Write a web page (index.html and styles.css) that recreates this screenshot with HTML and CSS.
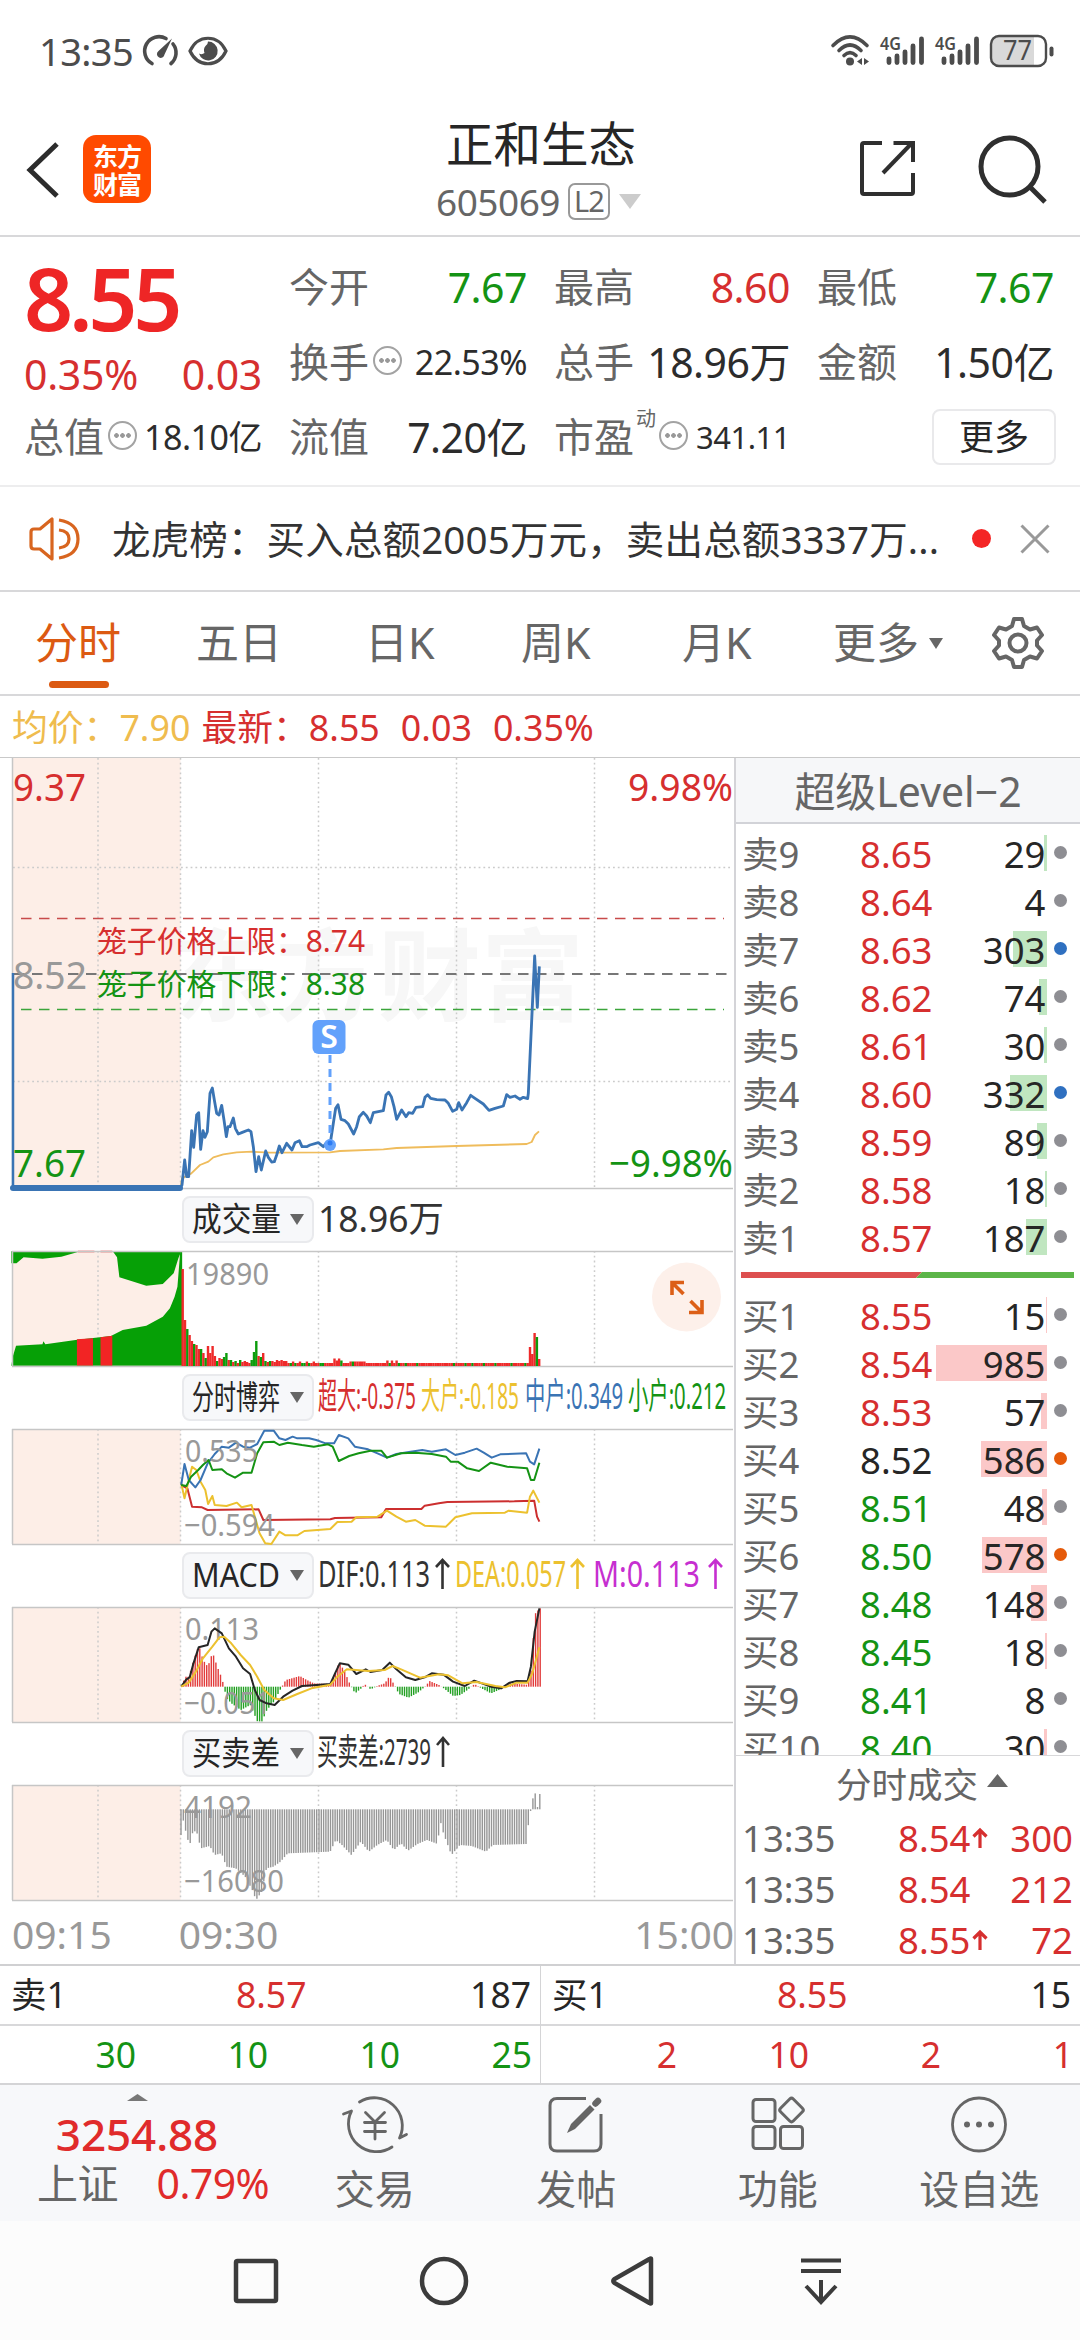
FILE: index.html
```html
<!DOCTYPE html>
<html lang="zh-CN">
<head>
<meta charset="utf-8">
<title>正和生态 605069</title>
<link rel="stylesheet" href="styles.css">
</head>
<body>
<div class="screen">

<div class="statusbar">
  <span class="clock">13:35</span>
  <svg class="st-gauge" width="36" height="32" viewBox="0 0 36 32"><g fill="none" stroke="#4c4c4c" stroke-width="3.6" stroke-linecap="round"><path d="M8 28.5A14 14 0 0 1 22 3.5"/><path d="M29 9A14 14 0 0 1 27 28.5"/></g><path d="M28 3.5L20.5 19.5A3.8 3.8 0 1 1 14.5 16Z" fill="#4c4c4c"/></svg>
  <svg class="st-eye" width="40" height="32" viewBox="0 0 40 32"><path d="M2 16C10 -1 30 -1 38 16C30 33 10 33 2 16Z" fill="none" stroke="#4c4c4c" stroke-width="3.2"/><path d="M20 6.500A9.500 9.500 0 1 1 11 18.500Q14 20 16.500 18Q15 14 17.500 11Q20 9.500 20 6.500Z" fill="#4c4c4c"/></svg>
  <span class="grow"></span>
  <svg width="38" height="32" viewBox="0 0 38 32"><g fill="none" stroke="#4c4c4c" stroke-width="3.6" stroke-linecap="round"><path d="M2 10.500Q19 -6.500 36 10.500"/><path d="M8 15.500Q19 4.500 30 15.500"/><path d="M13 20.500Q19 14.500 25 20.500"/></g><circle cx="19" cy="26.500" r="4" fill="#4c4c4c"/><path d="M31 23V30L26 26.500ZM33 23V30L38 26.500Z" fill="#4c4c4c"/></svg>
  <svg class="st-sig" width="46" height="32" viewBox="0 0 46 32"><text x="0" y="15" class="net" textLength="21" lengthAdjust="spacingAndGlyphs">4G</text><g stroke="#4c4c4c" stroke-width="4.800" stroke-linecap="round"><path d="M9 24V27.500M17 21V27.500M25 17V27.500M33 11V27.500M41.500 4V27.500"/></g></svg>
  <svg class="st-sig2" width="46" height="32" viewBox="0 0 46 32"><text x="0" y="15" class="net" textLength="21" lengthAdjust="spacingAndGlyphs">4G</text><g stroke="#4c4c4c" stroke-width="4.800" stroke-linecap="round"><path d="M9 24V27.500M17 21V27.500M25 17V27.500M33 11V27.500M41.500 4V27.500"/></g></svg>
  <svg class="st-bat" width="66" height="34" viewBox="0 0 66 34"><path d="M3 9Q3 3 9 3H45V31H9Q3 31 3 25Z" fill="#d9d9d9"/><rect x="2" y="2" width="55" height="30" rx="8" fill="none" stroke="#4c4c4c" stroke-width="2.400"/><rect x="60.500" y="12.500" width="4" height="10" rx="2" fill="#4c4c4c"/><text x="14" y="26" class="bat" textLength="29" lengthAdjust="spacingAndGlyphs">77</text></svg>
</div>

<header class="titlebar">
  <svg class="back" width="34" height="56" viewBox="0 0 34 56"><path d="M31 2L4 28L31 54" fill="none" stroke="#2c2c2c" stroke-width="5"/></svg>
  <div class="logo"><span>东方</span><span>财富</span></div>
  <div class="title">
    <div class="name">正和生态</div>
    <div class="code"><span>605069</span><span class="l2">L2</span><i class="tri-down grey"></i></div>
  </div>
  <svg class="share" width="60" height="60" viewBox="0 0 60 60"><g fill="none" stroke="#2f2f2f" stroke-width="4"><path d="M24 4H6Q4 4 4 6V53Q4 55 6 55H53Q55 55 55 53V34"/><path d="M35.500 4H55V23"/><path d="M54 4L25 34"/></g></svg>
  <svg class="search" width="70" height="72" viewBox="0 0 70 72"><g fill="none" stroke="#2f2f2f" stroke-width="5"><circle cx="31.500" cy="32.500" r="28.500"/><path d="M52 53L67 68"/></g></svg>
</header>

<section class="summary">
  <div class="col-a">
    <div class="price">8.55</div>
    <div class="chg red"><span>0.35%</span><span>0.03</span></div>
    <div class="cell"><b>总值</b><i class="dots"></i><span class="sm">18.10亿</span></div>
  </div>
  <div class="col-b">
    <div class="cell"><b>今开</b><span class="green">7.67</span></div>
    <div class="cell"><b>换手</b><i class="dots"></i><span class="sm">22.53%</span></div>
    <div class="cell"><b>流值</b><span>7.20亿</span></div>
  </div>
  <div class="col-c">
    <div class="cell"><b>最高</b><span class="red">8.60</span></div>
    <div class="cell"><b>总手</b><span>18.96万</span></div>
    <div class="cell"><b>市盈</b><sup>动</sup><i class="dots"></i><span class="xs">341.11</span></div>
  </div>
  <div class="col-d">
    <div class="cell"><b>最低</b><span class="green">7.67</span></div>
    <div class="cell"><b>金额</b><span>1.50亿</span></div>
    <div class="cell end"><button class="more">更多</button></div>
  </div>
</section>

<section class="notice">
  <svg width="52" height="46" viewBox="0 0 52 46"><g fill="none" stroke="#d8651f" stroke-width="3.200" stroke-linejoin="round"><path d="M23 3V43L11 33H5Q2 33 2 30V16Q2 13 5 13H11Z"/><path d="M30 14Q40 15 40 23Q40 31 30 32"/><path d="M30 4Q49 7 49 23Q49 39 30 42"/></g></svg>
  <p>龙虎榜：买入总额2005万元，卖出总额3337万...</p>
  <i class="reddot"></i>
  <svg width="30" height="30" viewBox="0 0 30 30"><path d="M1.500 1.500L28.500 28.500M28.500 1.500L1.500 28.500" stroke="#999" stroke-width="3"/></svg>
</section>

<nav class="tabs">
  <span class="on">分时</span><span>五日</span><span>日K</span><span>周K</span><span>月K</span><span class="m">更多</span><i class="tri-down"></i>
  <svg width="52" height="54" viewBox="0 0 52 54"><g fill="none" stroke="#666" stroke-width="4" stroke-linejoin="round"><path d="M22 3H30L32 10L38 13.500L45 11.500L50 19L45 24.500V29.500L50 35L45 42.500L38 40.500L32 44L30 51H22L20 44L14 40.500L7 42.500L2 35L7 29.500V24.500L2 19L7 11.500L14 13.500L20 10Z"/><circle cx="26" cy="27" r="8.500"/></g></svg>
</nav>

<div class="avg"><span class="gold">均价：7.90</span><span class="red">最新：8.55</span><span class="red">0.03</span><span class="red">0.35%</span></div>

<main class="body">
<div class="charts">
  <svg class="panel" width="734" height="430" viewBox="0 758 734 430">
    <text class="wm" x="172" y="1013" textLength="412" lengthAdjust="spacingAndGlyphs">东方财富</text>
    <rect x="13" y="758" width="167.500" height="430" fill="#fdeee7"/>
    <path class="grid" d="M98 758V1188M180.500 758V1188M318.500 758V1188M456.500 758V1188M594.500 758V1188M13 867.500H733M13 1081.500H733"/>
    <path class="axis" d="M12.500 758V1188M12 1188.500H733"/>
    <path d="M21 918.500H724" stroke="#c84a4a" stroke-width="1.500" stroke-dasharray="10.500 7.500"/>
    <path d="M21 1009.500H724" stroke="#3ba53b" stroke-width="1.500" stroke-dasharray="10.500 7.500"/>
    <path d="M14 974H733" stroke="#777" stroke-width="2" stroke-dasharray="10.500 7.500"/>
    <g transform="translate(170 1060) scale(.33333)" fill="none" stroke-linejoin="round">
      <polyline stroke="#efbc5c" stroke-width="5.500" points="32,383 36,355 64,340 90,315 115,305 130,292 160,283 200,277 245,275 300,278 480,277 510,273 640,268 680,264 860,258 1070,252 1085,246 1095,225 1107,214"/>
      <polyline stroke="#3a74b4" stroke-width="8.500" points="30,384 36,375 44,300 50,350 56,350 65,212 71,262 80,165 86,158 92,268 99,212 105,232 112,215 120,100 127,84 133,120 140,160 147,165 155,136 162,180 169,230 174,200 180,200 190,174 196,205 205,222 215,218 235,210 243,215 250,260 258,335 266,290 274,330 287,273 295,292 305,306 313,305 320,285 328,258 336,278 350,250 366,270 375,248 388,242 396,260 410,260 420,255 445,248 460,260 468,250 476,262 480,255 490,190 497,145 504,134 513,178 525,182 535,192 551,222 560,200 568,170 580,157 590,168 601,188 610,158 640,152 648,105 656,97 664,110 672,140 680,178 695,150 708,170 716,158 728,160 738,142 758,140 765,112 773,104 782,115 800,119 825,120 835,130 848,154 860,148 866,128 876,150 890,128 902,106 915,115 940,132 957,151 975,145 1000,138 1010,104 1020,112 1035,108 1050,118 1060,112 1073,116 1075,100 1094,-312 1102,-158 1108,-281"/>
    </g>
    <path d="M13 973V1188" stroke="#3a74b4" stroke-width="2.500"/>
    <path d="M13 1188H180" stroke="#3a74b4" stroke-width="6" stroke-linecap="round"/>
    <path d="M330 1055V1145" stroke="#62a1fb" stroke-width="3" stroke-dasharray="8 6"/>
    <circle cx="330" cy="1145" r="6" fill="#62a1fb"/><circle cx="330" cy="1143" r="2.500" fill="#2c7cf5"/>
    <rect x="312.500" y="1020" width="33" height="34" rx="6" fill="#62a1fb"/>
    <text class="badge" x="329" y="1048">S</text>
    <g class="lab">
      <text class="r" x="13" y="801" textLength="73" lengthAdjust="spacingAndGlyphs">9.37</text>
      <text class="r" x="628" y="801" textLength="105" lengthAdjust="spacingAndGlyphs">9.98%</text>
      <text class="a" x="13" y="989" textLength="74" lengthAdjust="spacingAndGlyphs">8.52</text>
      <text class="g" x="13" y="1177" textLength="73" lengthAdjust="spacingAndGlyphs">7.67</text>
      <text class="g" x="609" y="1177" textLength="124" lengthAdjust="spacingAndGlyphs">−9.98%</text>
    </g>
    <g class="cage">
      <text class="r" x="97" y="952" textLength="268" lengthAdjust="spacingAndGlyphs">笼子价格上限：8.74</text>
      <text class="g" x="97" y="995" textLength="268" lengthAdjust="spacingAndGlyphs">笼子价格下限：8.38</text>
    </g>
  </svg>

  <div class="legend"><span class="pick"><svg width="88" height="40"><text class="k" x="0" y="32" textLength="89" lengthAdjust="spacingAndGlyphs">成交量</text></svg><i class="tri-down"></i></span><svg width="420" height="46"><text class="v" x="4" y="36" textLength="126" lengthAdjust="spacingAndGlyphs">18.96万</text></svg></div>

  <svg class="panel" id="volume" width="734" height="115" viewBox="0 1251 734 115">
    <rect x="13" y="1251" width="167.500" height="115" fill="#fdeee7"/>
    <path class="grid" d="M98 1251V1366M180.500 1251V1366M318.500 1251V1366M456.500 1251V1366M594.500 1251V1366"/>
    <g transform="translate(0 1180) scale(.4719 .33333)">
      <path fill="#06a006" d="M24 557L27 530L34 497L90 493L92 484L96 493L160 480L235 468L260 450L310 437L345 410L360 385L370 350L376 320L382 214H386V557Z"/>
      <path fill="#06a006" d="M24 214V250L35 250L50 232L90 236L130 230L165 216H240L248 232L253 292L310 317L345 312L368 280L378 235L384 214Z"/>
      <path fill="#f22424" d="M163 478L197 475V557H163ZM213 472L238 467V557H213ZM165 212H200V217H165ZM213 212H238V217H213Z"/>
    </g>
    <path class="axis" d="M12.500 1251V1366M12 1251.500H733M12 1366.500H733"/>
    <g class="bars"></g>
    <text class="s" x="186" y="1285" textLength="83" lengthAdjust="spacingAndGlyphs">19890</text>
    <circle cx="686.500" cy="1297" r="34.500" fill="#fdf0ea"/>
    <g fill="none" stroke="#dc5f17" stroke-width="3.600"><path d="M684 1282.500H672V1295M672.500 1283L683.500 1294"/><path d="M689 1312.500H702V1300M701.500 1312L690.500 1301"/></g>
  </svg>

  <div class="legend"><span class="pick"><svg width="88" height="40"><text class="k" x="0" y="32" textLength="88" lengthAdjust="spacingAndGlyphs">分时博弈</text></svg><i class="tri-down"></i></span><svg width="420" height="46">
    <text class="v r" x="4" y="35" textLength="98" lengthAdjust="spacingAndGlyphs">超大:-0.375</text>
    <text class="v y" x="107" y="35" textLength="98" lengthAdjust="spacingAndGlyphs">大户:-0.185</text>
    <text class="v b" x="211" y="35" textLength="98" lengthAdjust="spacingAndGlyphs">中户:0.349</text>
    <text class="v g" x="314" y="35" textLength="98" lengthAdjust="spacingAndGlyphs">小户:0.212</text></svg></div>

  <svg class="panel" width="734" height="115" viewBox="0 1429 734 115">
    <rect x="13" y="1429" width="167.500" height="115" fill="#fdeee7"/>
    <path class="grid" d="M98 1429V1544M180.500 1429V1544M318.500 1429V1544M456.500 1429V1544M594.500 1429V1544"/>
    <path class="axis" d="M12.500 1429V1544M12 1429.500H733M12 1544.500H733"/>
    <g class="lines" transform="translate(0 1180) scale(.4719 .33333)">
      <polyline stroke="#cc2f2f" points="384,915 397,925 407,980 428,982 440,990 548,988 558,1020 700,1018 710,1014 808,1012 818,987 893,987 900,977 930,970 948,966 1090,964 1132,962 1138,1010 1143,1025"/>
      <polyline stroke="#ecc12f" points="384,910 391,955 400,900 407,860 416,870 425,905 435,930 441,972 450,948 455,975 480,978 502,968 512,982 533,975 540,1010 550,1060 562,1090 575,1092 592,1055 605,1066 630,1066 645,1053 700,1047 715,1026 745,1025 755,1012 800,1010 820,992 840,1010 860,1025 880,1020 900,1037 945,1040 965,1012 1000,1000 1070,998 1078,992 1117,998 1123,950 1130,932 1143,968"/>
      <polyline stroke="#3a74b4" points="384,915 391,852 400,900 414,922 425,900 440,850 455,822 470,800 485,803 500,788 515,800 530,803 545,792 560,752 580,752 592,775 605,780 620,770 630,775 655,775 670,780 690,790 708,790 718,765 738,775 752,800 780,808 800,820 820,833 840,822 870,815 895,810 915,815 945,808 965,825 985,818 1010,806 1025,818 1042,833 1060,823 1115,820 1123,845 1132,853 1143,806"/>
      <polyline stroke="#149314" points="384,915 395,918 405,890 420,870 430,855 442,840 450,870 470,868 480,880 498,893 515,878 533,878 545,820 558,787 580,785 592,795 610,788 640,795 665,800 695,793 705,800 718,843 740,828 760,820 785,812 808,812 820,833 850,820 880,818 915,822 945,830 955,845 970,845 990,865 1015,873 1040,848 1075,860 1117,865 1125,900 1132,900 1143,848"/>
    </g>
    <text class="s" x="185" y="1462" textLength="73" lengthAdjust="spacingAndGlyphs">0.535</text>
    <text class="s" x="184" y="1536" textLength="91" lengthAdjust="spacingAndGlyphs">−0.594</text>
  </svg>

  <div class="legend"><span class="pick"><svg width="88" height="40"><text class="k" x="0" y="32" textLength="88" lengthAdjust="spacingAndGlyphs">MACD</text></svg><i class="tri-down"></i></span><svg width="420" height="46">
    <text class="v" x="4" y="35" textLength="112" lengthAdjust="spacingAndGlyphs">DIF:0.113</text><path class="up" stroke="#333" d="M128.500 37V8M122 15L128.500 8L135 15"/>
    <text class="v y" x="141" y="35" textLength="111" lengthAdjust="spacingAndGlyphs">DEA:0.057</text><path class="up" stroke="#ecc12f" d="M263.500 37V8M257 15L263.500 8L270 15"/>
    <text class="v p" x="279" y="35" textLength="107" lengthAdjust="spacingAndGlyphs">M:0.113</text><path class="up" stroke="#c62fd0" d="M401.500 37V8M395 15L401.500 8L408 15"/></svg></div>

  <svg class="panel" id="macd" width="734" height="115" viewBox="0 1607 734 115">
    <rect x="13" y="1607" width="167.500" height="115" fill="#fdeee7"/>
    <path class="grid" d="M98 1607V1722M180.500 1607V1722M318.500 1607V1722M456.500 1607V1722M594.500 1607V1722"/>
    <path class="axis" d="M12.500 1607V1722M12 1607.500H733M12 1722.500H733"/>
    <g class="bars"></g>
    <text class="s" x="185" y="1640" textLength="74" lengthAdjust="spacingAndGlyphs">0.113</text>
    <text class="s" x="184" y="1714" textLength="87" lengthAdjust="spacingAndGlyphs">−0.051</text>
    <g class="lines" transform="translate(0 1540) scale(.4719 .33333)">
      <polyline stroke="#262626" points="384,440 395,418 402,412 410,370 421,322 440,315 448,275 455,265 470,280 485,325 500,350 515,385 530,402 540,450 550,480 565,490 582,495 600,470 620,452 640,438 700,432 710,400 720,370 738,374 755,402 775,388 785,396 810,390 826,368 840,388 860,412 880,420 900,412 915,400 940,404 960,425 985,438 1005,422 1040,440 1062,445 1080,428 1095,423 1118,424 1125,380 1133,275 1143,205"/>
      <polyline stroke="#ecc12f" points="384,440 400,428 415,395 430,355 450,320 465,292 475,290 490,310 510,345 530,375 545,410 560,450 580,475 600,480 630,462 660,445 700,434 715,410 735,388 780,393 815,390 832,378 850,388 890,413 930,403 950,406 980,430 1010,426 1050,438 1070,442 1095,428 1118,428 1128,400 1143,322"/>
    </g>
  </svg>

  <div class="legend"><span class="pick"><svg width="88" height="40"><text class="k" x="0" y="32" textLength="88" lengthAdjust="spacingAndGlyphs">买卖差</text></svg><i class="tri-down"></i></span><svg width="420" height="46"><text class="v" x="3" y="35" textLength="114" lengthAdjust="spacingAndGlyphs">买卖差:2739</text><path class="up" stroke="#333" d="M129 37V8M123 15L129 8L135 15"/></svg></div>

  <svg class="panel" id="diff" width="734" height="115" viewBox="0 1785 734 115">
    <rect x="13" y="1785" width="167.500" height="115" fill="#fdeee7"/>
    <path class="grid" d="M98 1785V1900M180.500 1785V1900M318.500 1785V1900M456.500 1785V1900M594.500 1785V1900"/>
    <path class="axis" d="M12.500 1785V1900M12 1785.500H733M12 1900.500H733"/>
    <g class="bars"></g>
    <text class="s" x="184" y="1818" textLength="68" lengthAdjust="spacingAndGlyphs">4192</text>
    <text class="s" x="184" y="1892" textLength="100" lengthAdjust="spacingAndGlyphs">−16080</text>
  </svg>

  <div class="times"><span>09:15</span><span class="t2">09:30</span><span class="t3">15:00</span></div>
</div>

<aside class="book">
  <h2>超级Level−2</h2>
  <div class="orders">
    <div class="o"><b>卖9</b><span class="red">8.65</span><em>29<i class="s" style="width:3px"></i></em><u></u></div>
    <div class="o"><b>卖8</b><span class="red">8.64</span><em>4</em><u></u></div>
    <div class="o"><b>卖7</b><span class="red">8.63</span><em>303<i class="s" style="width:34px"></i></em><u class="blue"></u></div>
    <div class="o"><b>卖6</b><span class="red">8.62</span><em>74<i class="s" style="width:8px"></i></em><u></u></div>
    <div class="o"><b>卖5</b><span class="red">8.61</span><em>30<i class="s" style="width:3px"></i></em><u></u></div>
    <div class="o"><b>卖4</b><span class="red">8.60</span><em>332<i class="s" style="width:37px"></i></em><u class="blue"></u></div>
    <div class="o"><b>卖3</b><span class="red">8.59</span><em>89<i class="s" style="width:10px"></i></em><u></u></div>
    <div class="o"><b>卖2</b><span class="red">8.58</span><em>18<i class="s" style="width:2px"></i></em><u></u></div>
    <div class="o"><b>卖1</b><span class="red">8.57</span><em>187<i class="s" style="width:21px"></i></em><u></u></div>
    <svg class="ratio" width="333" height="6" viewBox="0 0 333 6"><path d="M0 0H181L175 6H0Z" fill="#dd4f4f"/><path d="M181 0H333V6H175Z" fill="#5cb548"/></svg>
    <div class="o"><b>买1</b><span class="red">8.55</span><em>15<i class="b" style="width:1px"></i></em><u></u></div>
    <div class="o"><b>买2</b><span class="red">8.54</span><em>985<i class="b" style="width:111px"></i></em><u></u></div>
    <div class="o"><b>买3</b><span class="red">8.53</span><em>57<i class="b" style="width:6px"></i></em><u></u></div>
    <div class="o"><b>买4</b><span>8.52</span><em>586<i class="b" style="width:66px"></i></em><u class="orange"></u></div>
    <div class="o"><b>买5</b><span class="green">8.51</span><em>48<i class="b" style="width:5px"></i></em><u></u></div>
    <div class="o"><b>买6</b><span class="green">8.50</span><em>578<i class="b" style="width:65px"></i></em><u class="orange"></u></div>
    <div class="o"><b>买7</b><span class="green">8.48</span><em>148<i class="b" style="width:16px"></i></em><u></u></div>
    <div class="o"><b>买8</b><span class="green">8.45</span><em>18<i class="b" style="width:2px"></i></em><u></u></div>
    <div class="o"><b>买9</b><span class="green">8.41</span><em>8</em><u></u></div>
    <div class="o"><b>买10</b><span class="green">8.40</span><em>30<i class="b" style="width:3px"></i></em><u></u></div>
  </div>
  <div class="trades">
    <div class="th">分时成交<svg width="21" height="13" viewBox="0 0 21 13"><path d="M0 13L10.500 0L21 13Z" fill="#666"/></svg></div>
    <div class="t"><b>13:35</b><span>8.54<svg width="16" height="24" viewBox="0 0 16 24"><path d="M8 21V3M1.500 9.500L8 3L14.500 9.500"/></svg></span><em>300</em></div>
    <div class="t"><b>13:35</b><span>8.54</span><em>212</em></div>
    <div class="t"><b>13:35</b><span>8.55<svg width="16" height="24" viewBox="0 0 16 24"><path d="M8 21V3M1.500 9.500L8 3L14.500 9.500"/></svg></span><em>72</em></div>
  </div>
</aside>
</main>

<section class="queue">
  <div class="side">
    <div class="best"><span>卖1</span><span class="red">8.57</span><span>187</span></div>
    <div class="lots green"><span>30</span><span>10</span><span>10</span><span>25</span></div>
  </div>
  <div class="side">
    <div class="best"><span>买1</span><span class="red">8.55</span><span>15</span></div>
    <div class="lots red"><span>2</span><span>10</span><span>2</span><span>1</span></div>
  </div>
</section>

<footer class="toolbar">
  <div class="index"><svg width="21" height="7" viewBox="0 0 21 7"><path d="M0 7L10.500 0L21 7Z" fill="#777"/></svg><strong>3254.88</strong><div><b>上证</b><span>0.79%</span></div></div>
  <div class="tool"><svg width="66" height="60" viewBox="0 0 66 60"><g fill="none" stroke="#666" stroke-width="2.800" stroke-linecap="round" stroke-linejoin="round"><path d="M17.500 8A28 28 0 0 1 57.500 44L64.500 40.500"/><path d="M50 53A28 28 0 0 1 9.500 17L1.500 20"/><path d="M23.500 18.500L33 28L42.500 18.500M22.500 28.500H43.500M22.500 37.500H43.500M33 28V45"/></g></svg><span>交易</span></div>
  <div class="tool"><svg width="56" height="60" viewBox="0 0 56 60"><path d="M38 4.500H9Q2 4.500 2 11.500V50Q2 57 9 57H46Q53 57 53 50V20" fill="none" stroke="#666" stroke-width="3"/><path d="M19 39L23 30L42 11L46.500 15.500L27 35Z" fill="#666"/><path d="M47.500 9.500L50 7" stroke="#666" stroke-width="6.500" stroke-linecap="round"/></svg><span>发帖</span></div>
  <div class="tool"><svg width="54" height="60" viewBox="0 0 54 60"><g fill="none" stroke="#666" stroke-width="3"><rect x="2" y="5.500" width="22" height="22" rx="3"/><rect x="2" y="32.500" width="22" height="22" rx="3"/><rect x="29.500" y="32.500" width="22" height="22" rx="3"/><rect x="31.500" y="7" width="18" height="18" rx="2.500" transform="rotate(45 40.500 16)"/></g></svg><span>功能</span></div>
  <div class="tool"><svg width="60" height="60" viewBox="0 0 60 60"><circle cx="30" cy="30.500" r="26.500" fill="none" stroke="#666" stroke-width="2.800"/><g fill="#666"><circle cx="18" cy="30.500" r="3"/><circle cx="30" cy="30.500" r="3"/><circle cx="42" cy="30.500" r="3"/></g></svg><span>设自选</span></div>
</footer>

<div class="sysnav">
  <svg width="46" height="50" viewBox="0 0 46 50"><rect x="3" y="5" width="40" height="40" rx="1.500"/></svg>
  <svg width="50" height="50" viewBox="0 0 50 50"><circle cx="25" cy="25" r="22"/></svg>
  <svg width="46" height="52" viewBox="0 0 46 52"><path d="M41 4V48Q41 49 39.500 48L4.500 28Q2 26 4.500 24L39.500 4Q41 3 41 4Z"/></svg>
  <svg width="46" height="52" viewBox="0 0 46 52"><path d="M3 5.500H43M3 16H43M23 25V47M8 31L23 47L38 31"/></svg>
</div>
</div>
<script src="bars.js"></script>
</body>
</html>
```
FILE: styles.css
```css
* { box-sizing: border-box; margin: 0; padding: 0; }
body { background: #fff; font-family: "Noto Sans", "Noto Sans CJK SC", sans-serif; color: #262626; }
b, em, u, i, strong { font-weight: 400; font-style: normal; text-decoration: none; }
svg { display: block; flex: none; overflow: visible; }
.screen { width: 1080px; height: 2340px; display: flex; flex-direction: column; overflow: hidden; line-height: 1; white-space: nowrap; }
.screen > * { flex: none; }
.red { color: #d62f2f; }
.green { color: #149314; }
.gold { color: #efbc4e; }
.statusbar .grow { flex: 1; }
.tri-down { border: solid transparent; border-width: 11px 7px 0; border-top-color: #666; width: 0; height: 0; }

.statusbar { height: 104px; padding: 0 25px 2px 39px; display: flex; align-items: center; color: #4c4c4c; }
.clock { font-size: 38px; letter-spacing: -.6px; }
.st-gauge { margin-left: 11px; }
.st-eye { margin-left: 8px; }
.st-sig { margin-left: 11px; }
.st-sig2 { margin-left: 9px; }
.st-bat { margin-left: 8px; }
.net { font: 600 18px "Noto Sans", sans-serif; fill: #4c4c4c; }
.bat { font: 400 28px "Noto Sans", sans-serif; fill: #4c4c4c; }

.titlebar { height: 133px; border-bottom: 2px solid #d8d8da; display: flex; align-items: flex-start; padding-left: 26px; }
.back { margin-top: 38px; }
.logo { width: 68px; height: 68px; margin: 31px 0 0 23px; border-radius: 13px; background: #ff4a00; color: #fff; display: flex; flex-direction: column; align-items: center; justify-content: center; gap: 1px; font: 700 25px/27px "Noto Sans CJK SC", sans-serif; letter-spacing: -1px; }
.title { width: 400px; margin: 13px 0 0 190px; }
.name { font-size: 47.500px; line-height: 54px; text-align: center; }
.code { display: flex; align-items: center; padding-left: 95px; margin-top: 10px; font-size: 37px; height: 40px; color: #666; letter-spacing: -.5px; }
.l2 { width: 42px; height: 37px; margin-left: 8px; border: 2px solid #999; border-radius: 7px; font-size: 29px; line-height: 32px; text-align: center; letter-spacing: -1px; }
.tri-down.grey { border-width: 15px 11.500px 0; border-top-color: #ccc; margin-left: 9px; }
.share { margin: 35px 0 0 117px; }
.search { margin: 30px 0 0 60px; }

.summary { height: 250px; border-bottom: 2px solid #ededee; display: grid; grid-template-columns: 238px 238px 236px 237px; column-gap: 27px; padding: 13px 26px 0 24px; font-size: 41px; }
.summary > div { display: flex; flex-direction: column; }
.price { height: 100px; font-size: 86px; font-weight: 600; line-height: 96px; color: #ee2626; letter-spacing: -4.300px; }
.chg { height: 50px; display: flex; justify-content: space-between; line-height: 49px; letter-spacing: -.3px; }
.cell { height: 75px; display: flex; align-items: center; color: #2c2c2c; padding-bottom: 1px; }
.cell > b { color: #666; width: 82px; font-size: 40px; }
.cell > span { margin-left: auto; letter-spacing: -.5px; }
.cell > span.red { color: #d62f2f; }
.cell > span.green { color: #149314; }
.cell > .sm { font-size: 34px; }
.cell > .xs { font-size: 31px; }
.cell sup { font-size: 20px; color: #666; align-self: flex-start; margin-top: 9px; margin-right: 3px; }
.col-c .cell sup + .dots { margin-left: 0; }
.dots { width: 29px; height: 29px; margin: 0 0 4px 2px; border-radius: 50%; border: 2px solid #a3a3a3; background: radial-gradient(circle at 6.500px 12.500px, #999 2px, transparent 2.600px), radial-gradient(circle at 12.500px 12.500px, #999 2px, transparent 2.600px), radial-gradient(circle at 18.500px 12.500px, #999 2px, transparent 2.600px); }
.cell.end { justify-content: flex-end; }
.more { width: 124px; height: 56px; margin-right: -2px; border: 2px solid #e9e9eb; border-radius: 8px; background: #fff; font: 400 35px "Noto Sans CJK SC", sans-serif; line-height: 1; color: #262626; padding-bottom: 6px; }

.notice { height: 105px; border-bottom: 2px solid #d8d8da; display: flex; align-items: center; padding: 0 30px 0 29px; }
.notice p { width: 860px; margin-left: 31px; font-size: 38.500px; color: #333; line-height: 60px; letter-spacing: .15px; }
.reddot { width: 19px; height: 19px; border-radius: 50%; background: #f42525; margin-right: 29px; }

.tabs { height: 104px; border-bottom: 2px solid #d8d8da; display: flex; align-items: center; font-size: 43px; color: #666; padding-left: 35px; }
.tabs span { width: 161px; height: 102px; line-height: 102px; flex: none; position: relative; }
.tabs span:nth-child(2) { width: 169px; }
.tabs span:nth-child(3) { width: 156px; }
.tabs span:nth-child(5) { width: 151px; }
.tabs span.m { width: 96px; }
.tabs .on { color: #dc5a12; }
.tabs .on::after { content: ""; position: absolute; left: 14px; bottom: 6px; width: 60px; height: 7px; border-radius: 4px; background: #dc5a12; }
.tabs svg { margin-left: 49px; }

.avg { height: 62px; border-bottom: 1px solid #c9c9c9; display: flex; align-items: center; gap: 21px; padding: 2px 0 0 12px; font-size: 35.800px; }
.avg .gold { margin-right: -10px; }

.body { height: 1208px; border-bottom: 2px solid #d0d0d2; display: flex; }
.charts { width: 734px; }
.grid { fill: none; stroke: #cbcbcb; stroke-width: 1.500; stroke-dasharray: 1.800 3; }
.axis { fill: none; stroke: #c6c6c6; stroke-width: 1.500; }
.lines { fill: none; stroke-linejoin: round; }
.lines polyline { vector-effect: non-scaling-stroke; stroke-width: 2; }
.panel text, .legend text { font-family: "Noto Sans", "Noto Sans CJK SC", sans-serif; }
.wm { font-size: 100px; font-weight: 700; fill: #f7f7f7; }
.lab text { font-size: 39px; }
.cage text { font-size: 30px; }
.r { fill: #d62f2f; }
.g { fill: #149314; }
.a, .s { fill: #999; }
.y { fill: #ecc12f; }
.b { fill: #3a74b4; }
.p { fill: #c62fd0; }
.panel text.s { font-size: 31px; }
.badge { font-size: 32px; font-weight: 600; fill: #fff; text-anchor: middle; }
.legend { height: 63px; display: flex; align-items: center; padding: 0 0 1px 182px; }
.pick { width: 132px; height: 47px; border: 2px solid #e9eaed; border-radius: 8px; background: #f7f8fa; display: flex; align-items: center; padding-left: 8px; }
.pick .tri-down { margin-left: 10px; }
.k { font-size: 33px; fill: #262626; }
.v { font-size: 36px; fill: #333; }
.v.r { fill: #d62f2f; } .v.y { fill: #ecc12f; } .v.b { fill: #3a74b4; } .v.g { fill: #149314; } .v.p { fill: #c62fd0; }
.up { fill: none; stroke-width: 2.600; }
.times { height: 65px; display: flex; align-items: center; padding: 2px 0 0 12px; font-size: 39px; color: #999; }
.t2 { margin-left: 67px; }
.t3 { margin-left: auto; }

.book { width: 346px; border-left: 2px solid #d4d4d8; }
.book h2 { height: 66px; background: #f6f7f9; border-bottom: 2px solid #d2d3d8; font-weight: 400; font-size: 41px; line-height: 66px; text-align: center; color: #666; }
.orders { height: 931px; overflow: hidden; padding: 6px 0 0 6px; }
.o { height: 48px; display: grid; grid-template-columns: 118px 186.500px 1fr; align-items: center; font-size: 36.500px; line-height: 47px; }
.o b { color: #666; }
.o > span, .o em, .o b { grid-row: 1; }
.o > span { grid-column: 2; }
.o em { grid-column: 2; position: relative; isolation: isolate; text-align: right; padding-right: 1px; }
.o em i { position: absolute; z-index: -1; right: 0; top: 4px; height: 36px; }
.o i.s { background: #c0e6c0; }
.o i.b { background: #fbc8c8; }
.o > span { z-index: 1; }
.o u { grid-column: 3; width: 13px; height: 13px; border-radius: 50%; background: #8e8e93; margin: 0 0 4px 7px; }
.o u.blue { background: #2f70c0; }
.o u.orange { background: #e55a0a; }
.ratio { margin: 10px 0 14px -1px; }
.trades { border-top: 1px solid #d8d8da; }
.th { height: 57px; display: flex; align-items: center; justify-content: center; gap: 9px; font-size: 35.500px; color: #666; padding-left: 28px; }
.th svg { margin-top: -8px; }
.t { height: 51px; display: grid; grid-template-columns: 156px 90px 1fr; align-items: center; padding: 0 7px 0 6px; font-size: 36.500px; }
.t b { color: #666; }
.t span { color: #d62f2f; display: flex; align-items: center; gap: 2px; }
.t svg path { fill: none; stroke: #d62f2f; stroke-width: 3.200; }
.t em { color: #d62f2f; text-align: right; }

.queue { height: 119px; display: flex; border-bottom: 2px solid #d4d4d6; }
.side { width: 540px; }
.side + .side { border-left: 1px solid #d4d4d6; }
.best { height: 60px; border-bottom: 2px solid #d8d8da; display: grid; grid-template-columns: 225px 1fr auto; align-items: center; padding: 0 9px 0 11px; font-size: 35.500px; }
.lots { height: 57px; display: grid; grid-template-columns: 136px 132px 132px 132px; align-items: center; text-align: right; font-size: 35.500px; }

.toolbar { height: 136px; background: #f7f8fa; display: flex; }
.index { width: 274px; padding-top: 9px; display: flex; flex-direction: column; align-items: center; color: #e02b2b; }
.index strong { font-size: 44px; line-height: 48px; margin-top: 9px; font-weight: 500; letter-spacing: -.1px; }
.index div { display: flex; width: 232px; margin-left: 32px; justify-content: space-between; margin-top: 1px; font-size: 41px; line-height: 48px; letter-spacing: -.6px; }
.index b { color: #666; }
.tool { width: 201.500px; display: flex; flex-direction: column; align-items: center; padding-top: 9px; color: #666; font-size: 40px; }
.tool span { line-height: 50px; margin-top: 10px; }

.sysnav { height: 119px; background: #fcfcfc; display: flex; align-items: center; padding-left: 233px; }
.sysnav svg { fill: none; stroke: #3c3c3c; stroke-width: 4.500; }
.sysnav svg:nth-child(2) { margin-left: 139.500px; }
.sysnav svg:nth-child(3) { margin-left: 141px; }
.sysnav svg:nth-child(4) { margin-left: 142px; stroke-width: 4; }
```
FILE: bars.js
```js
const NS = 'http://www.w3.org/2000/svg';
const STEP = 2.3;
const START = 181.5;
const COUNT = 156;

function bar(group, x, y0, y1, width, color) {
  const r = document.createElementNS(NS, 'rect');
  r.setAttribute('x', x);
  r.setAttribute('y', Math.min(y0, y1));
  r.setAttribute('width', width);
  r.setAttribute('height', Math.abs(y1 - y0));
  r.setAttribute('fill', color);
  group.appendChild(r);
}

function at(points, i) {
  for (let k = 1; k < points.length; k++) {
    const [i0, v0] = points[k - 1];
    const [i1, v1] = points[k];
    if (i <= i1) return v0 + (v1 - v0) * (i - i0) / (i1 - i0);
  }
  return points[points.length - 1][1];
}

const RED = '#ee2a2a', GREEN = '#0c9c0c';

const volHead = [97, 46, 37, 31, 25, 22, 21, 17, 17, 13, 8, 20, 13, 20, 10, 5, 8, 7, 9, 13, 6, 6, 4, 5, 3, 6, 4, 5, 4, 3, 6, 14, 25, 10, 9, 13, 5, 4, 5, 5, 4, 6, 5, 6, 5, 5];
const greens = new Set([2, 5, 8, 10, 15, 18, 19, 21, 23, 25, 30, 31, 32, 34, 36, 38, 47, 49, 52, 53, 55, 60, 61, 69, 74, 90, 94, 97, 102, 118, 123, 126, 131, 136, 143, 149, 154]);
const vol = document.querySelector('#volume .bars');
for (let i = 0; i < COUNT; i++) {
  let v = i < volHead.length ? volHead[i] : 3;
  if (i >= 46 && i < 58 && i % 3 === 0) v = 4.5;
  if (i === 66 || i === 68) v = 7.5;
  if (i === 67 || i === 69) v = 5.5;
  if (i > 72 && i < 80) v = 4.5;
  if (i === 89 || i === 91 || i === 93) v = 5.5;
  if (i === 151) v = 19;
  if (i === 152) v = 12;
  if (i === 153) v = 33;
  if (i === 154) v = 29;
  if (i === 155) v = 7;
  bar(vol, START + i * STEP, 1366, 1366 - v, 2.4, greens.has(i) ? GREEN : RED);
}

const toIndex = p => [(p[0] - 384) / 4.873, p[1]];
const macdPoints = [[384,0],[392,30],[400,30],[410,80],[421,125],[430,80],[440,60],[450,103],[460,60],[470,25],[474,0],[480,-35],[490,-50],[510,-70],[530,-55],[545,-104],[555,-104],[565,-70],[580,-45],[595,-5],[605,20],[635,32],[650,20],[665,10],[700,8],[710,40],[718,75],[730,45],[742,5],[752,-20],[765,-5],[772,8],[785,-8],[800,3],[815,10],[825,32],[835,5],[845,-22],[865,-33],[885,-18],[900,0],[910,17],[930,5],[940,-5],[960,-28],[975,-25],[990,-10],[1005,8],[1020,-5],[1040,-20],[1065,-5],[1080,10],[1115,6],[1125,50],[1133,218],[1143,235]].map(toIndex);
const macd = document.querySelector('#macd .bars');
for (let i = 0; i <= COUNT; i++) {
  const v = at(macdPoints, i) / 3;
  bar(macd, START + i * STEP - 0.8, 1686.7, 1686.7 - v, 1.4, v > 0 ? '#e23b3b' : '#22a022');
}

const diffPoints = [[382,922],[387,830],[395,880],[402,918],[410,870],[418,880],[426,925],[445,918],[455,945],[470,940],[480,980],[500,985],[520,1010],[535,1050],[543,1080],[555,1055],[565,985],[580,980],[595,965],[610,940],[700,935],[712,900],[725,915],[745,945],[765,905],[782,935],[800,915],[820,900],[835,930],[850,910],[865,932],[885,912],[905,900],[928,912],[933,840],[940,880],[957,945],[975,915],[1000,918],[1030,935],[1045,915],[1115,912],[1122,830],[1128,792],[1133,738],[1138,815],[1143,762]].map(toIndex);
const diff = document.querySelector('#diff .bars');
for (let i = 0; i <= COUNT; i++) {
  const y = 1540 + at(diffPoints, i) / 3;
  bar(diff, START + i * STEP - 1.2, 1809.3, y, 1.4, '#969696');
}
```
